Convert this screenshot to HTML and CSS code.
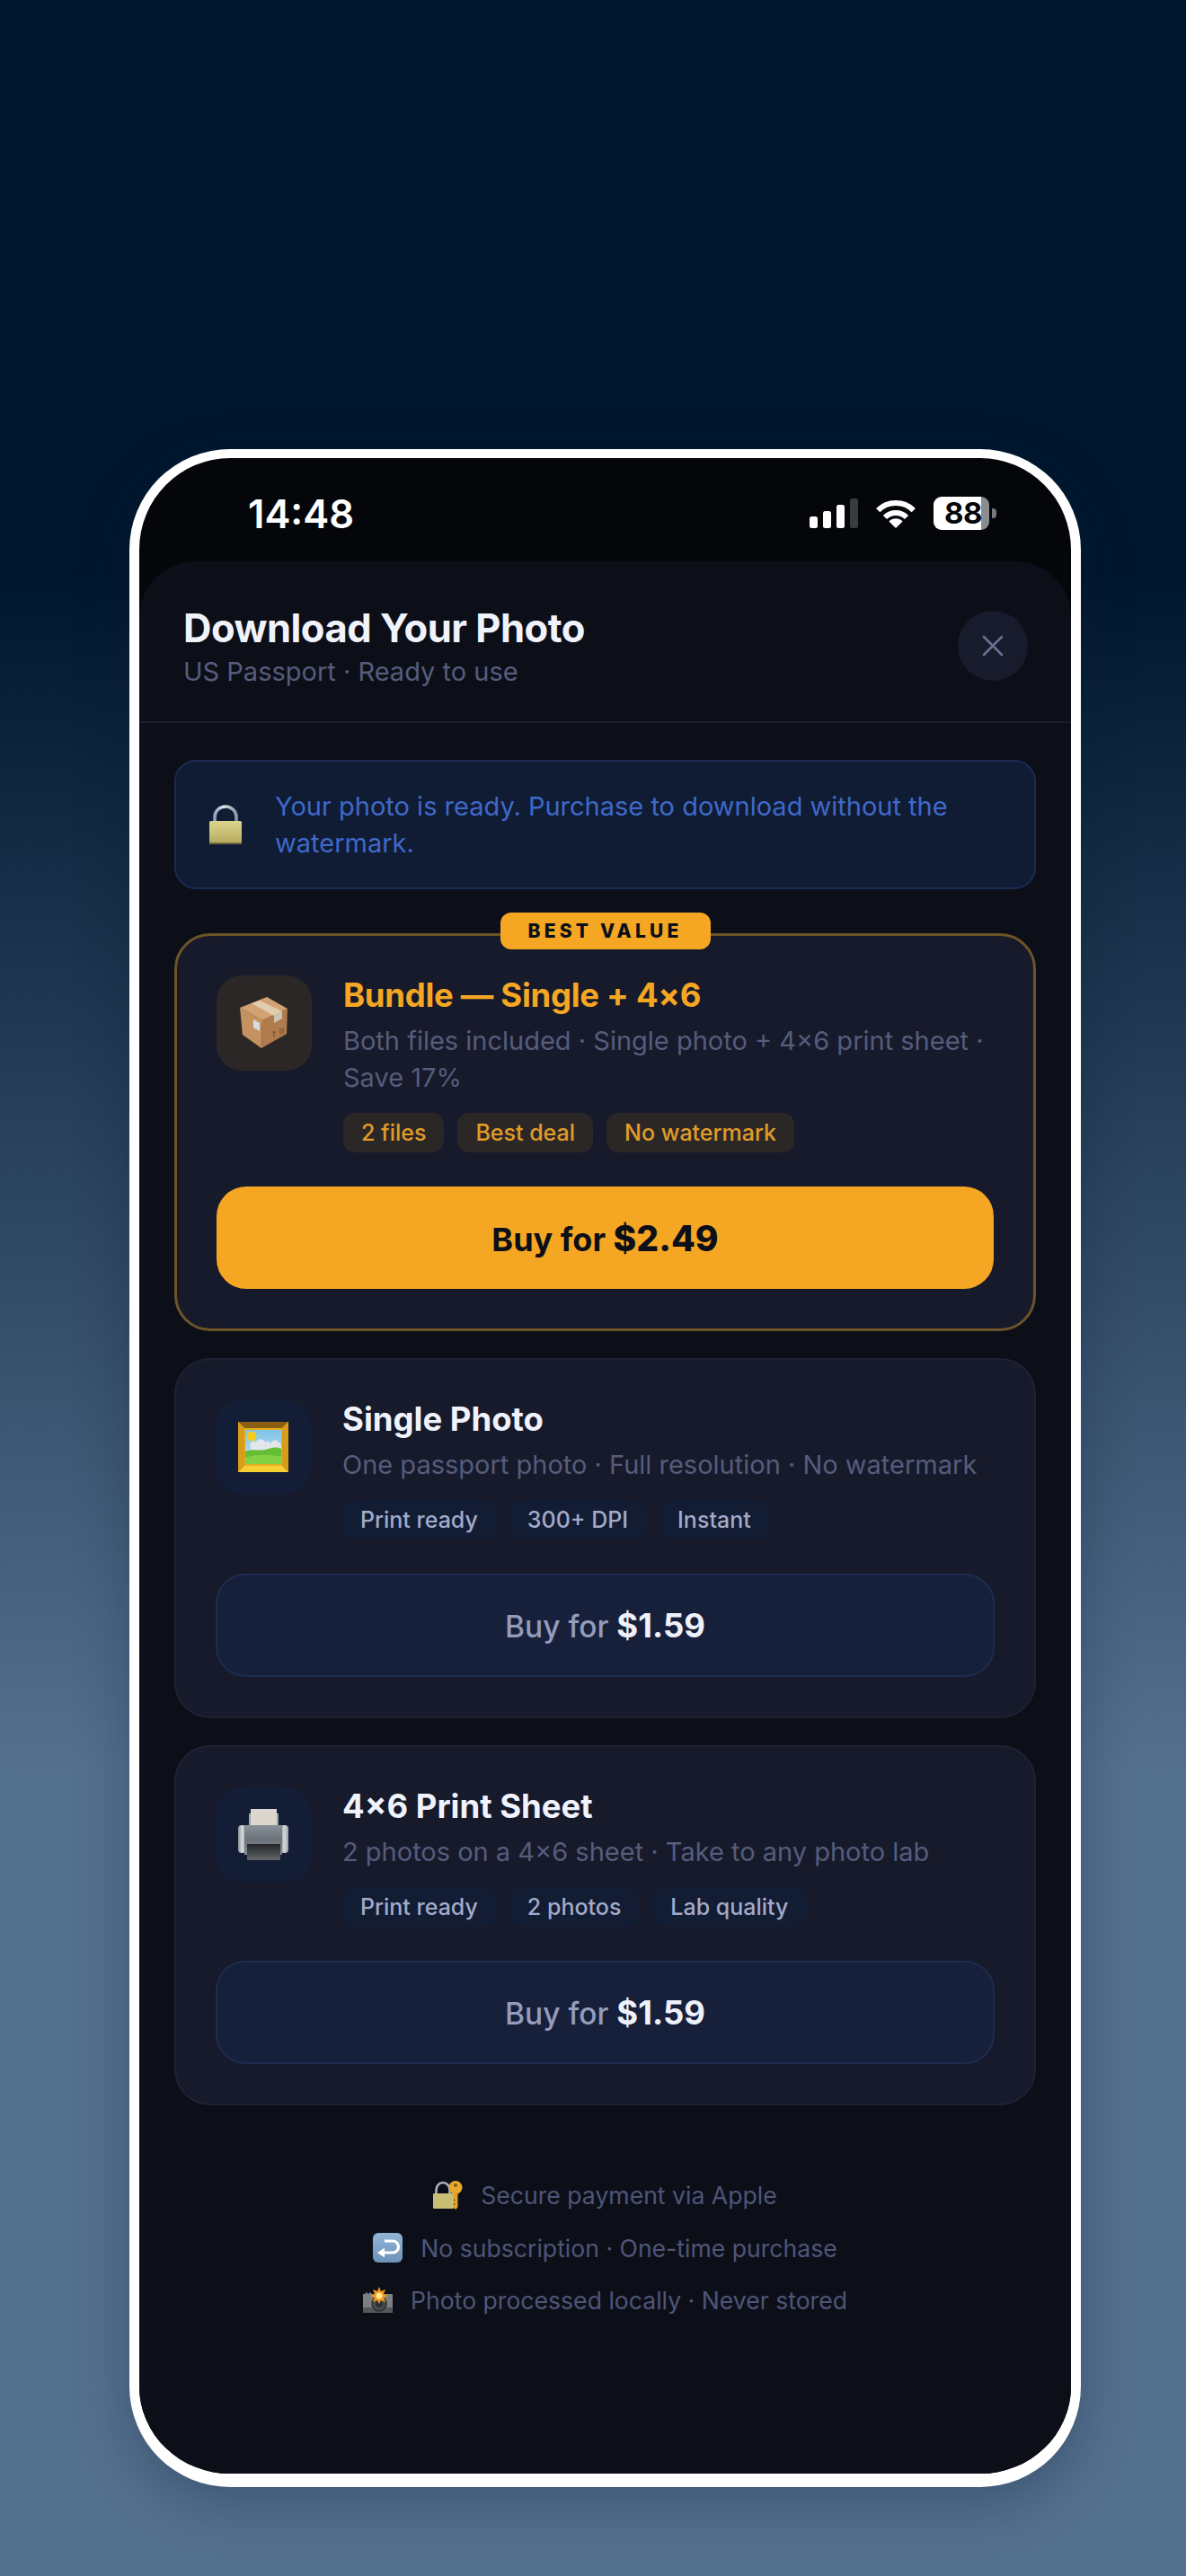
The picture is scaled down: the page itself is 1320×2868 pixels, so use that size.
FILE: index.html
```html
<!DOCTYPE html>
<html lang="en">
<head>
    <meta charset="UTF-8">
    <meta name="viewport" content="width=device-width, initial-scale=1.0">
    <title>Download Your Photo</title>
    <link rel="stylesheet" href="styles.css">
</head>
<body>
    <div class="phone">
        <div class="status-bar">
            <div class="clock">14:48</div>
            <div class="status-icons">
                <div class="signal">
                    <span class="bar bar-1"></span>
                    <span class="bar bar-2"></span>
                    <span class="bar bar-3"></span>
                    <span class="bar bar-4"></span>
                </div>
                <svg class="wifi" width="46" height="31" viewBox="0 0 46 31">
                    <path d="M3.2 11.2a28 28 0 0 1 39.6 0" fill="none" stroke="#fff" stroke-width="6"/>
                    <path d="M11 19a17 17 0 0 1 24 0" fill="none" stroke="#fff" stroke-width="6"/>
                    <path d="M23 31l-7.6-7.6a10.8 10.8 0 0 1 15.2 0z" fill="#fff"/>
                </svg>
                <div class="battery">88</div>
            </div>
        </div>

        <div class="sheet">
            <div class="sheet-header">
                <div>
                    <div class="sheet-title">Download Your Photo</div>
                    <div class="sheet-subtitle">US Passport · Ready to use</div>
                </div>
                <button class="close-btn">
                    <svg width="24" height="24" viewBox="0 0 24 24">
                        <path d="M2 2l20 20M22 2L2 22" stroke="#6a7092" stroke-width="2.6" stroke-linecap="round"/>
                    </svg>
                </button>
            </div>

            <div class="sheet-body">
                <div class="notice">
                    <svg class="notice-icon" width="36" height="44" viewBox="0 0 36 44">
                        <defs>
                            <linearGradient id="lockBody" x1="0" y1="0" x2="0" y2="1">
                                <stop offset="0" stop-color="#dcd48f"/>
                                <stop offset="0.55" stop-color="#c9bf74"/>
                                <stop offset="1" stop-color="#b3a95f"/>
                            </linearGradient>
                            <linearGradient id="lockShackle" x1="0" y1="0" x2="1" y2="0">
                                <stop offset="0" stop-color="#8fa0b4"/>
                                <stop offset="0.4" stop-color="#dfe4ea"/>
                                <stop offset="1" stop-color="#8d96a3"/>
                            </linearGradient>
                        </defs>
                        <path d="M6 19v-6a12 11 0 0 1 24 0v6" fill="none" stroke="url(#lockShackle)" stroke-width="3.6"/>
                        <rect y="18" width="36" height="25" rx="1.5" fill="url(#lockBody)"/>
                        <rect y="42" width="36" height="2" fill="#6f6a3e"/>
                    </svg>
                    <p>Your photo is ready. Purchase to download without the watermark.</p>
                </div>

                <div class="plan plan-featured">
                    <div class="plan-badge">BEST VALUE</div>
                    <div class="plan-top">
                        <div class="plan-icon">
                            <svg width="54" height="58" viewBox="0 0 54 58">
                                <path d="M30 0L53 13 25 26 0 12z" fill="#d2a273"/>
                                <path d="M0 12l25 14-1 31L3 42z" fill="#c4925f"/>
                                <path d="M25 26l28-13-1 28-28 16z" fill="#b07c4e"/>
                                <path d="M13 7l9-3 25 12-9 5z" fill="#e0cdb0"/>
                                <path d="M38 21l9-5v8l-9 5z" fill="#cfc2ae"/>
                                <path d="M15 25l7 4v9l-7-4z" fill="#d8dde2"/>
                                <path d="M36 39h4M38 39v6M45 35v7M48 34v7" stroke="#7a5230" stroke-width="1.2" fill="none"/>
                            </svg>
                        </div>
                        <div class="plan-info">
                            <div class="plan-title">Bundle — Single + 4×6</div>
                            <div class="plan-desc">Both files included · Single photo + 4×6 print sheet · Save 17%</div>
                            <div class="tags">
                                <span class="tag">2 files</span>
                                <span class="tag">Best deal</span>
                                <span class="tag">No watermark</span>
                            </div>
                        </div>
                    </div>
                    <button class="buy-btn">Buy for <strong>$2.49</strong></button>
                </div>

                <div class="plan">
                    <div class="plan-top">
                        <div class="plan-icon">
                            <svg width="56" height="56" viewBox="0 0 56 56">
                                <defs>
                                    <linearGradient id="pictureSky" x1="0" y1="0" x2="0" y2="1">
                                        <stop offset="0" stop-color="#7fc4e8"/>
                                        <stop offset="1" stop-color="#c9e4ee"/>
                                    </linearGradient>
                                </defs>
                                <rect width="56" height="56" fill="#e6ae1e"/>
                                <path d="M0 0h56l-7 7H7z" fill="#8a5f12"/>
                                <path d="M0 56h56l-7-7H7z" fill="#f5d032"/>
                                <path d="M0 0l7 7v42l-7 7zM56 0l-7 7v42l7 7z" fill="#d79c18"/>
                                <rect x="8" y="9" width="40" height="38" fill="url(#pictureSky)"/>
                                <circle cx="15" cy="16" r="5.5" fill="#f4cc1d"/>
                                <path d="M14 28c-3-5 3-8 6-5 1-5 9-5 10 0 3-3 7 0 5 3 3-6 8-7 10-3 3 0 3 4 3 5v4H14z" fill="#e4e6ea"/>
                                <path d="M8 33c8-4 14 0 22-2s12-4 18-1v17H8z" fill="#63bd35"/>
                                <path d="M8 40c12-4 26-4 40-1v8H8z" fill="#82d144"/>
                            </svg>
                        </div>
                        <div class="plan-info">
                            <div class="plan-title">Single Photo</div>
                            <div class="plan-desc">One passport photo · Full resolution · No watermark</div>
                            <div class="tags">
                                <span class="tag">Print ready</span>
                                <span class="tag">300+ DPI</span>
                                <span class="tag">Instant</span>
                            </div>
                        </div>
                    </div>
                    <button class="buy-btn">Buy for <strong>$1.59</strong></button>
                </div>

                <div class="plan">
                    <div class="plan-top">
                        <div class="plan-icon">
                            <svg width="56" height="57" viewBox="0 0 56 57">
                                <defs>
                                    <linearGradient id="printerBody" x1="0" y1="0" x2="0" y2="1">
                                        <stop offset="0" stop-color="#8a9198"/>
                                        <stop offset="0.5" stop-color="#6b7279"/>
                                        <stop offset="1" stop-color="#868c92"/>
                                    </linearGradient>
                                    <linearGradient id="printerArm" x1="0" y1="0" x2="1" y2="0">
                                        <stop offset="0" stop-color="#8e9398"/>
                                        <stop offset="0.5" stop-color="#d5d8db"/>
                                        <stop offset="1" stop-color="#9ca1a6"/>
                                    </linearGradient>
                                    <linearGradient id="printerTray" x1="0" y1="0" x2="0" y2="1">
                                        <stop offset="0" stop-color="#232527"/>
                                        <stop offset="1" stop-color="#63676a"/>
                                    </linearGradient>
                                </defs>
                                <rect x="14" y="0" width="29" height="20" fill="#dbd7cf"/>
                                <path d="M12 5h2v15h-2zM43 5h2v15h-2z" fill="#9ea3a8"/>
                                <rect y="18" width="9" height="31" rx="4" fill="url(#printerArm)"/>
                                <rect x="47" y="18" width="9" height="31" rx="4" fill="url(#printerArm)"/>
                                <rect x="7" y="18" width="42" height="33" fill="url(#printerBody)"/>
                                <rect x="10" y="39" width="37" height="18" fill="url(#printerTray)"/>
                            </svg>
                        </div>
                        <div class="plan-info">
                            <div class="plan-title">4×6 Print Sheet</div>
                            <div class="plan-desc">2 photos on a 4×6 sheet · Take to any photo lab</div>
                            <div class="tags">
                                <span class="tag">Print ready</span>
                                <span class="tag">2 photos</span>
                                <span class="tag">Lab quality</span>
                            </div>
                        </div>
                    </div>
                    <button class="buy-btn">Buy for <strong>$1.59</strong></button>
                </div>

                <div class="trust">
                    <div class="trust-row">
                        <svg width="33" height="32" viewBox="0 0 33 32">
                            <path d="M3.500 16v-6a7.500 8 0 0 1 15 0v6" fill="none" stroke="#a9b4bf" stroke-width="2.6"/>
                            <rect y="14" width="23" height="17" rx="1" fill="#c9bf74"/>
                            <circle cx="25" cy="7.500" r="7.500" fill="#e9a92c"/>
                            <circle cx="25" cy="5" r="2" fill="#7a5a1c"/>
                            <path d="M22.500 13h5v16l-2 3-3-2v-3l2-1-2-1.500v-2l2-1-2-1.500z" fill="#e2a127"/>
                        </svg>
                        <span>Secure payment via Apple</span>
                    </div>
                    <div class="trust-row">
                        <svg width="33" height="33" viewBox="0 0 33 33">
                            <defs>
                                <linearGradient id="returnKey" x1="0" y1="0" x2="0" y2="1">
                                    <stop offset="0" stop-color="#8fb5d8"/>
                                    <stop offset="1" stop-color="#6d93b9"/>
                                </linearGradient>
                            </defs>
                            <rect width="33" height="33" rx="6" fill="url(#returnKey)"/>
                            <path d="M13 9h9a6 6 0 0 1 0 13H11" fill="none" stroke="#fff" stroke-width="3.200"/>
                            <path d="M5 22l8-5.500v11z" fill="#fff"/>
                        </svg>
                        <span>No subscription · One-time purchase</span>
                    </div>
                    <div class="trust-row">
                        <svg width="33" height="30" viewBox="0 0 33 30">
                            <path d="M2 8l2-2 2 2 2-2 2 2h23v21H0V8z" fill="#7d7f80"/>
                            <rect y="23" width="33" height="6" fill="#55585a"/>
                            <circle cx="18" cy="19" r="8" fill="#4a4d50" stroke="#2d2f31" stroke-width="1.500"/>
                            <circle cx="18" cy="19" r="4" fill="#2d3136"/>
                            <path d="M18 0l2 5 5-2-2 5 5 2-5 2 2 5-5-2-2 4-2-4-5 2 2-5-5-2 5-2-2-5 5 2z" fill="#f09a1e"/>
                            <circle cx="18" cy="10" r="3.500" fill="#ffe98a"/>
                        </svg>
                        <span>Photo processed locally · Never stored</span>
                    </div>
                </div>
            </div>
        </div>
    </div>
</body>
</html>
```

FILE: styles.css
```css
* {
    margin: 0;
    padding: 0;
    box-sizing: border-box;
}

body {
    font-family: 'Inter', sans-serif;
    width: 1320px;
    height: 2868px;
    padding: 500px 0 0 144px;
    overflow: hidden;
    background: linear-gradient(180deg, #01172f 0, #01172f 640px, #54708f 1975px, #54708f 100%);
}

.phone {
    width: 1059px;
    height: 2269px;
    background: #05060a;
    border: 11px solid #fff;
    border-top-width: 10px;
    border-bottom-width: 15px;
    border-radius: 112px;
    overflow: hidden;
    display: flex;
    flex-direction: column;
    box-shadow: 0 18px 60px rgba(10, 25, 50, 0.3);
}

/* Status bar */
.status-bar {
    height: 115px;
    flex-shrink: 0;
    display: flex;
    align-items: flex-start;
    justify-content: space-between;
    padding: 43px 91px 0 121px;
}

.clock {
    color: #fff;
    font-size: 43.5px;
    font-weight: 600;
    line-height: 38px;
}

.status-icons {
    display: flex;
    align-items: flex-end;
    height: 37px;
}

.signal {
    display: flex;
    align-items: flex-end;
    gap: 6px;
    height: 33px;
    margin-bottom: 2px;
}

.bar {
    width: 9px;
    background: #fff;
    border-radius: 2.5px;
}

.bar-1 { height: 13px; }
.bar-2 { height: 19px; }
.bar-3 { height: 26px; }
.bar-4 { height: 33px; background: #3a3b40; }

.wifi {
    margin: 0 19px 2px 19px;
}

.battery {
    position: relative;
    width: 62px;
    height: 37px;
    border-radius: 9px;
    background: linear-gradient(90deg, #fff 0, #fff 86%, #8b8c8f 86%);
    color: #05060a;
    font-size: 33px;
    font-weight: 700;
    line-height: 37px;
    padding-left: 12px;
    letter-spacing: -0.5px;
}

.battery::after {
    content: '';
    position: absolute;
    left: 65px;
    top: 13px;
    width: 5px;
    height: 11px;
    background: #77787b;
    border-radius: 0 4px 4px 0;
}

/* Sheet */
.sheet {
    flex: 1;
    background: #0c0f18;
    border-radius: 62px 62px 0 0;
}

.sheet-header {
    display: flex;
    justify-content: space-between;
    align-items: flex-start;
    height: 180px;
    padding: 48px 48px 0 49px;
    border-bottom: 2px solid #1a1e2e;
}

.sheet-title {
    color: #f0f2fc;
    font-size: 43.5px;
    font-weight: 700;
    line-height: 53px;
    letter-spacing: -0.5px;
}

.sheet-subtitle {
    color: #565c7c;
    font-size: 29px;
    line-height: 36px;
    margin-top: 4px;
}

.close-btn {
    width: 78px;
    height: 78px;
    margin-top: 7px;
    border: none;
    border-radius: 50%;
    background: #181b2b;
    display: flex;
    align-items: center;
    justify-content: center;
}

.sheet-body {
    padding: 41px 39px 0;
}

.notice {
    display: flex;
    align-items: center;
    gap: 37px;
    height: 144px;
    padding: 0 37px;
    background: #101b34;
    border: 2px solid #1a2a52;
    border-radius: 24px;
    margin-bottom: 49px;
}

.notice-icon {
    flex-shrink: 0;
}

.notice p {
    color: #3f69c8;
    font-size: 29px;
    line-height: 41px;
}

/* Plan cards */
.plan {
    position: relative;
    background: #161a2a;
    border: 2px solid #1e2233;
    border-radius: 40px;
    padding: 44px;
    margin-bottom: 30px;
}

.plan-featured {
    border: 3px solid #6d5428;
}

.plan-badge {
    position: absolute;
    top: -26px;
    left: 50%;
    transform: translateX(-50%);
    width: 234px;
    height: 41px;
    background: #f5a623;
    border-radius: 12px;
    color: #0c0f18;
    font-size: 21px;
    font-weight: 800;
    line-height: 41px;
    letter-spacing: 4.2px;
    text-align: center;
}

.plan-top {
    display: flex;
    gap: 35px;
}

.plan-icon {
    width: 106px;
    height: 106px;
    flex-shrink: 0;
    border-radius: 28px;
    background: #131d36;
    display: flex;
    align-items: center;
    justify-content: center;
}

.plan-featured .plan-icon {
    background: #2c2727;
}

.plan-info {
    flex: 1;
}

.plan-title {
    color: #f0f2fc;
    font-size: 36.5px;
    font-weight: 700;
    line-height: 44px;
}

.plan-featured .plan-title {
    color: #f5a623;
    letter-spacing: -0.3px;
}

.plan-desc {
    color: #565c7c;
    font-size: 29px;
    line-height: 41px;
    margin-top: 8px;
}

.tags {
    display: flex;
    gap: 15px;
    margin-top: 18.5px;
}

.tag {
    height: 44px;
    padding: 0 20px;
    border-radius: 13px;
    background: #121c33;
    color: #a3aac8;
    font-size: 25px;
    font-weight: 500;
    line-height: 44px;
}

.plan-featured .tag {
    background: #2c2727;
    color: #e09c28;
}

.buy-btn {
    display: block;
    width: 100%;
    height: 115px;
    margin-top: 38.5px;
    background: #17203a;
    border: 2px solid #1d2c50;
    border-radius: 33px;
    color: #949cbc;
    font-family: inherit;
    font-size: 33.5px;
    font-weight: 500;
}

.buy-btn strong {
    color: #eef0fa;
    font-size: 36.5px;
    font-weight: 700;
}

.plan-featured .buy-btn {
    height: 114px;
    background: #f5a623;
    border: none;
    color: #0c0f18;
    font-size: 36px;
    font-weight: 700;
}

.plan-featured .buy-btn strong {
    color: #0c0f18;
    font-size: 39px;
    font-weight: 800;
}

/* Footer notes */
.trust {
    display: flex;
    flex-direction: column;
    align-items: center;
    gap: 24.5px;
    margin-top: 83px;
}

.trust-row {
    display: flex;
    align-items: center;
    gap: 20px;
    height: 34px;
    color: #4f5578;
    font-size: 26.6px;
}
```
